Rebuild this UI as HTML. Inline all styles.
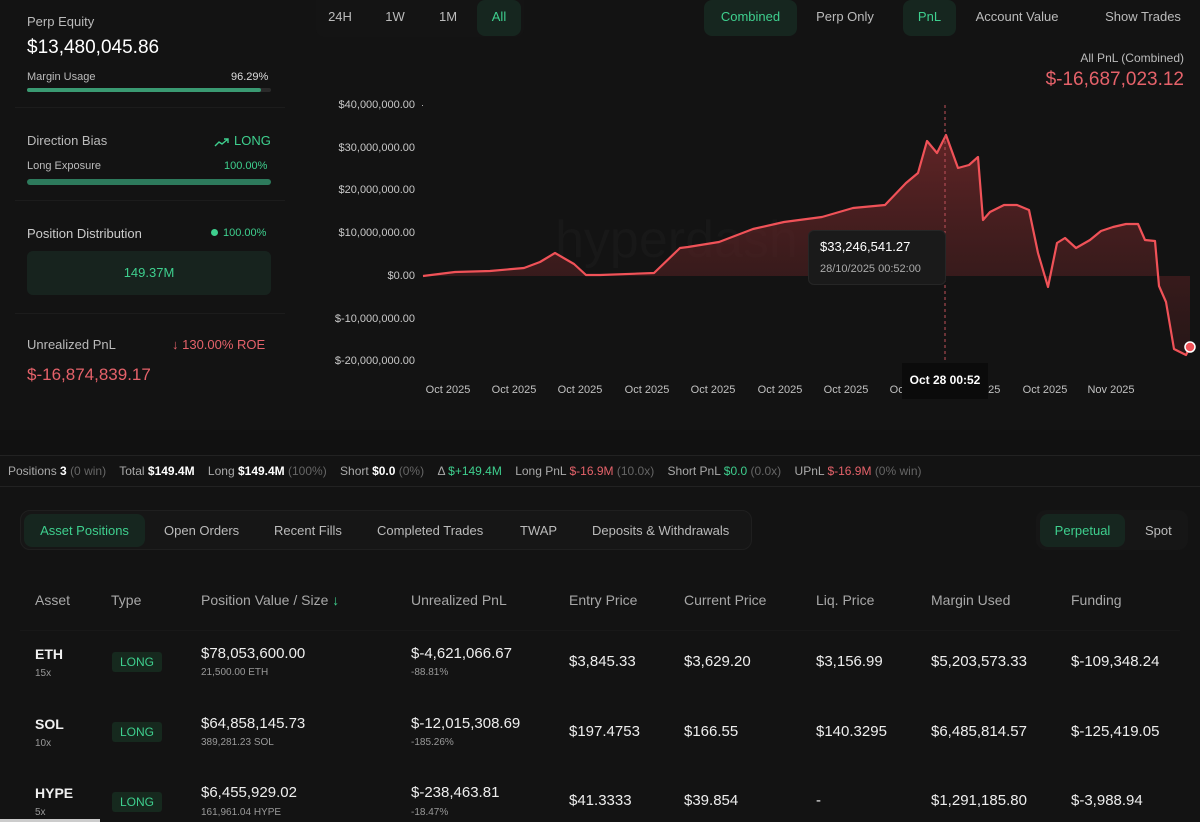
<!DOCTYPE html>
<html><head><meta charset="utf-8"><style>
*{box-sizing:border-box;margin:0;padding:0}
body{width:1200px;height:822px;background:#131313;color:#e8e8e8;font-family:"Liberation Sans",sans-serif;position:relative;overflow:hidden}
.a{position:absolute;white-space:nowrap}
.g{color:#3ecf8e}.r{color:#e5626a}.m{color:#9a9a9a}
.btn{position:absolute;top:0;height:36px;line-height:34px;font-size:13px;color:#bbb;text-align:center}
.on{background:#16261f;color:#3ecf8e;border-radius:8px}
.yl{position:absolute;right:785px;font-size:11px;color:#c8c8c8}
.xl{position:absolute;top:384px;font-size:11px;color:#c0c0c0;transform:translateX(-50%)}
.th{position:absolute;top:592px;font-size:14px;color:#a8a8a8}
.c1{font-size:14px;color:#f0f0f0;font-weight:bold}
.v{font-size:15px;color:#eee}
.sub{font-size:10px;color:#999}
.tag{position:absolute;width:50px;height:20px;background:#16291e;color:#3ecf8e;font-size:12px;text-align:center;line-height:20px;border-radius:3px}
</style></head><body>
<div class="a m" style="left:27px;top:14px;font-size:13px;color:#bbb">Perp Equity</div>
<div class="a" style="left:27px;top:37px;font-size:19px;color:#fff">$13,480,045.86</div>
<div class="a" style="left:27px;top:71px;font-size:11px;color:#bbb">Margin Usage</div>
<div class="a" style="left:231px;top:71px;font-size:11px;color:#ddd">96.29%</div>
<div class="a" style="left:27px;top:88px;width:244px;height:4px;background:#2a2a2a;border-radius:2px"><div style="width:96%;height:4px;background:#3a9a72;border-radius:2px"></div></div>
<div class="a" style="left:15px;top:107px;width:270px;height:1px;background:#1c1c1c"></div>
<div class="a" style="left:27px;top:133px;font-size:13px;color:#bbb">Direction Bias</div>
<div class="a g" style="left:214px;top:133px;font-size:13px"><svg width="16" height="10" viewBox="0 0 16 10" style="vertical-align:middle;margin-right:4px"><path d="M1 9 L5 5 L8 7 L14 2 M10 2 H14 V6" fill="none" stroke="#3ecf8e" stroke-width="1.4"/></svg>LONG</div>
<div class="a" style="left:27px;top:160px;font-size:11px;color:#bbb">Long Exposure</div>
<div class="a g" style="left:224px;top:160px;font-size:11px">100.00%</div>
<div class="a" style="left:27px;top:179px;width:244px;height:6px;background:#2d7a5c;border-radius:3px"></div>
<div class="a" style="left:15px;top:200px;width:270px;height:1px;background:#1c1c1c"></div>
<div class="a" style="left:27px;top:226px;font-size:13px;color:#ccc">Position Distribution</div>
<div class="a g" style="left:211px;top:227px;font-size:11px"><span style="display:inline-block;width:7px;height:7px;border-radius:50%;background:#3ecf8e;margin-right:5px"></span>100.00%</div>
<div class="a g" style="left:27px;top:251px;width:244px;height:44px;background:#17231e;border-radius:6px;text-align:center;line-height:44px;font-size:13px">149.37M</div>
<div class="a" style="left:15px;top:313px;width:270px;height:1px;background:#1c1c1c"></div>
<div class="a" style="left:27px;top:337px;font-size:13px;color:#bbb">Unrealized PnL</div>
<div class="a r" style="left:172px;top:337px;font-size:13px">↓ 130.00% ROE</div>
<div class="a r" style="left:27px;top:365px;font-size:17px">$-16,874,839.17</div>

<div class="a" style="left:316px;top:0;width:208px;height:37px;background:#141414;border-radius:0 0 8px 8px"></div>
<div class="btn" style="left:318px;width:44px">24H</div>
<div class="btn" style="left:374px;width:42px">1W</div>
<div class="btn" style="left:427px;width:42px">1M</div>
<div class="btn on" style="left:477px;width:44px">All</div>
<div class="btn on" style="left:704px;width:93px">Combined</div>
<div class="btn" style="left:804px;width:82px">Perp Only</div>
<div class="btn on" style="left:903px;width:53px">PnL</div>
<div class="btn" style="left:962px;width:110px">Account Value</div>
<div class="btn" style="left:1092px;width:102px">Show Trades</div>
<div class="a" style="right:16px;top:51px;font-size:12px;color:#bbb">All PnL (Combined)</div>
<div class="a r" style="right:16px;top:69px;font-size:19px">$-16,687,023.12</div>

<div class="yl" style="top:99px">$40,000,000.00</div>
<div class="a" style="left:421px;top:100px;font-size:9px;color:#ccc">·</div>
<div class="yl" style="top:142px">$30,000,000.00</div>
<div class="yl" style="top:184px">$20,000,000.00</div>
<div class="yl" style="top:227px">$10,000,000.00</div>
<div class="yl" style="top:270px">$0.00</div>
<div class="yl" style="top:313px">$-10,000,000.00</div>
<div class="yl" style="top:355px">$-20,000,000.00</div>

<div class="a" style="left:555px;top:210px;font-size:52px;color:#181818;font-weight:300">hyperdash</div>
<svg class="a" style="left:0;top:0" width="1200" height="420">
<defs><linearGradient id="f" x1="0" y1="0" x2="0" y2="1"><stop offset="0" stop-color="#7a2a2c" stop-opacity=".75"/><stop offset="1" stop-color="#3a1a1b" stop-opacity=".5"/></linearGradient></defs>
<path d="M423 276 L455 272 L490 271 L524 268 L540 262 L555 253 L574 264 L586 275 L600 275 L654 273 L680 248 L688 247 L719 242 L753 229 L784 222 L822 217 L853 208 L885 205 L906 183 L918 173 L927 141 L937 153 L946 135 L958 168 L969 165 L978 157 L983 220 L990 212 L1004 205 L1017 205 L1029 210 L1038 253 L1048 287 L1057 243 L1065 238 L1076 248 L1090 240 L1101 231 L1113 227 L1126 224 L1138 224 L1145 240 L1155 241 L1159 286 L1166 302 L1174 349 L1186 355 L1190 347 L1190 276 Z" fill="url(#f)"/>
<path d="M423 276 L455 272 L490 271 L524 268 L540 262 L555 253 L574 264 L586 275 L600 275 L654 273 L680 248 L688 247 L719 242 L753 229 L784 222 L822 217 L853 208 L885 205 L906 183 L918 173 L927 141 L937 153 L946 135 L958 168 L969 165 L978 157 L983 220 L990 212 L1004 205 L1017 205 L1029 210 L1038 253 L1048 287 L1057 243 L1065 238 L1076 248 L1090 240 L1101 231 L1113 227 L1126 224 L1138 224 L1145 240 L1155 241 L1159 286 L1166 302 L1174 349 L1186 355 L1190 347" fill="none" stroke="#f05258" stroke-width="2.2" stroke-linejoin="round"/>
<line x1="945" y1="105" x2="945" y2="365" stroke="#c0505a" stroke-width="1" stroke-dasharray="3 3"/>
<circle cx="1190" cy="347" r="5" fill="#f05258" stroke="#fff" stroke-width="1.5"/>
</svg>
<div class="a" style="left:808px;top:230px;width:138px;height:55px;background:#1a1a1a;border-radius:6px;border:1px solid #262626"></div>
<div class="a" style="left:820px;top:239px;font-size:13px;color:#fff">$33,246,541.27</div>
<div class="a" style="left:820px;top:263px;font-size:11px;color:#aaa">28/10/2025 00:52:00</div>

<div class="xl" style="left:448px">Oct 2025</div><div class="xl" style="left:514px">Oct 2025</div><div class="xl" style="left:580px">Oct 2025</div><div class="xl" style="left:647px">Oct 2025</div><div class="xl" style="left:713px">Oct 2025</div><div class="xl" style="left:780px">Oct 2025</div><div class="xl" style="left:846px">Oct 2025</div><div class="xl" style="left:912px">Oct 2025</div><div class="xl" style="left:978px">Oct 2025</div><div class="xl" style="left:1045px">Oct 2025</div><div class="xl" style="left:1111px">Nov 2025</div>
<div class="a" style="left:902px;top:363px;width:86px;height:36px;background:#0b0b0b;color:#fff;font-size:12px;font-weight:bold;text-align:center;line-height:34px">Oct 28 00:52</div>

<div class="a" style="left:0;top:430px;width:1200px;height:26px;background:#111"></div>
<div class="a" style="left:0;top:455px;width:1200px;height:1px;background:#222"></div>
<div class="a" style="left:0;top:486px;width:1200px;height:1px;background:#222"></div>
<div class="a" style="left:8px;top:464px;font-size:12px;color:#aaa">Positions <b style="color:#fff">3</b> <span style="color:#666">(0 win)</span>&nbsp;&nbsp;&nbsp; Total <b style="color:#fff">$149.4M</b>&nbsp;&nbsp;&nbsp; Long <b style="color:#fff">$149.4M</b> <span style="color:#666">(100%)</span>&nbsp;&nbsp;&nbsp; Short <b style="color:#fff">$0.0</b> <span style="color:#666">(0%)</span>&nbsp;&nbsp;&nbsp; Δ <span class="g">$+149.4M</span>&nbsp;&nbsp;&nbsp; Long PnL <span class="r">$-16.9M</span> <span style="color:#666">(10.0x)</span>&nbsp;&nbsp;&nbsp; Short PnL <span class="g">$0.0</span> <span style="color:#666">(0.0x)</span>&nbsp;&nbsp;&nbsp; UPnL <span class="r">$-16.9M</span> <span style="color:#666">(0% win)</span></div>

<div class="a" style="left:20px;top:510px;width:732px;height:40px;background:#161616;border-radius:10px;border:1px solid #1f1f1f"></div>
<div class="a on" style="left:24px;top:514px;width:121px;height:33px;line-height:33px;text-align:center;font-size:13px">Asset Positions</div>
<div class="a" style="left:164px;top:523px;font-size:13px;color:#bbb">Open Orders</div>
<div class="a" style="left:274px;top:523px;font-size:13px;color:#bbb">Recent Fills</div>
<div class="a" style="left:377px;top:523px;font-size:13px;color:#bbb">Completed Trades</div>
<div class="a" style="left:520px;top:523px;font-size:13px;color:#bbb">TWAP</div>
<div class="a" style="left:592px;top:523px;font-size:13px;color:#bbb">Deposits &amp; Withdrawals</div>
<div class="a" style="left:1036px;top:510px;width:152px;height:40px;background:#161616;border-radius:10px"></div>
<div class="a on" style="left:1040px;top:514px;width:85px;height:33px;line-height:33px;text-align:center;font-size:13px">Perpetual</div>
<div class="a" style="left:1145px;top:523px;font-size:13px;color:#bbb">Spot</div>

<div class="th" style="left:35px">Asset</div><div class="th" style="left:111px">Type</div><div class="th" style="left:201px">Position Value / Size <span class="g">↓</span></div><div class="th" style="left:411px">Unrealized PnL</div><div class="th" style="left:569px">Entry Price</div><div class="th" style="left:684px">Current Price</div><div class="th" style="left:816px">Liq. Price</div><div class="th" style="left:931px">Margin Used</div><div class="th" style="left:1071px">Funding</div>
<div class="a" style="left:20px;top:630px;width:1160px;height:1px;background:#181818"></div>

<div class="a c1" style="left:35px;top:646px">ETH</div><div class="a sub" style="left:35px;top:668px">15x</div>
<div class="tag" style="left:112px;top:652px">LONG</div>
<div class="a v" style="left:201px;top:645px">$78,053,600.00</div><div class="a sub" style="left:201px;top:667px">21,500.00 ETH</div>
<div class="a v r" style="left:411px;top:645px">$-4,621,066.67</div><div class="a sub r" style="left:411px;top:667px">-88.81%</div>
<div class="a v" style="left:569px;top:653px">$3,845.33</div><div class="a v" style="left:684px;top:653px">$3,629.20</div><div class="a v" style="left:816px;top:653px">$3,156.99</div><div class="a v" style="left:931px;top:653px">$5,203,573.33</div><div class="a v r" style="left:1071px;top:653px">$-109,348.24</div>

<div class="a c1" style="left:35px;top:716px">SOL</div><div class="a sub" style="left:35px;top:738px">10x</div>
<div class="tag" style="left:112px;top:722px">LONG</div>
<div class="a v" style="left:201px;top:715px">$64,858,145.73</div><div class="a sub" style="left:201px;top:737px">389,281.23 SOL</div>
<div class="a v r" style="left:411px;top:715px">$-12,015,308.69</div><div class="a sub r" style="left:411px;top:737px">-185.26%</div>
<div class="a v" style="left:569px;top:723px">$197.4753</div><div class="a v" style="left:684px;top:723px">$166.55</div><div class="a v" style="left:816px;top:723px">$140.3295</div><div class="a v" style="left:931px;top:723px">$6,485,814.57</div><div class="a v r" style="left:1071px;top:723px">$-125,419.05</div>

<div class="a c1" style="left:35px;top:785px">HYPE</div><div class="a sub" style="left:35px;top:807px">5x</div>
<div class="tag" style="left:112px;top:792px">LONG</div>
<div class="a v" style="left:201px;top:784px">$6,455,929.02</div><div class="a sub" style="left:201px;top:807px">161,961.04 HYPE</div>
<div class="a v r" style="left:411px;top:784px">$-238,463.81</div><div class="a sub r" style="left:411px;top:807px">-18.47%</div>
<div class="a v" style="left:569px;top:792px">$41.3333</div><div class="a v" style="left:684px;top:792px">$39.854</div><div class="a v" style="left:816px;top:792px">-</div><div class="a v" style="left:931px;top:792px">$1,291,185.80</div><div class="a v r" style="left:1071px;top:792px">$-3,988.94</div>
<div class="a" style="left:0;top:819px;width:100px;height:3px;background:#ccc"></div>
</body></html>
